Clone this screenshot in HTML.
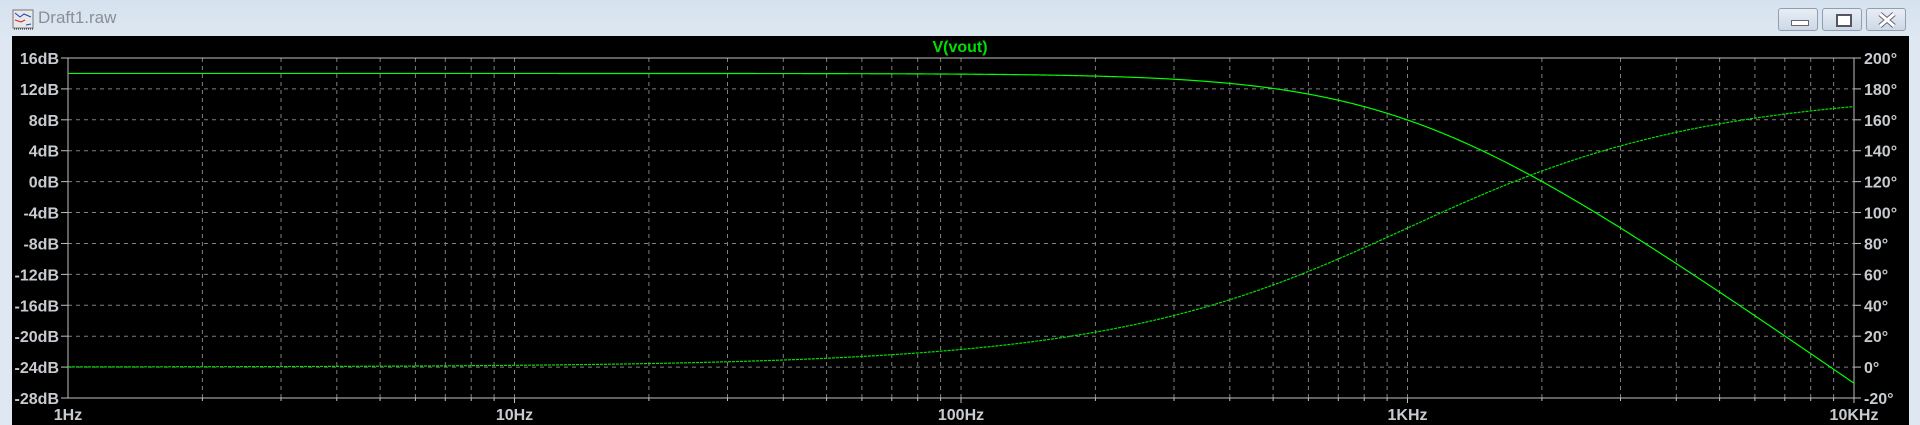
<!DOCTYPE html>
<html><head><meta charset="utf-8"><style>
html,body{margin:0;padding:0;width:1920px;height:425px;overflow:hidden;background:#dfe8f2;font-family:"Liberation Sans",sans-serif}
#tb{position:absolute;left:0;top:0;width:1920px;height:36px;background:linear-gradient(#d6e2ef,#dde7f1)}
#title{position:absolute;left:38px;top:8px;font-size:17px;color:#8a8f96}
.btn{position:absolute;top:8px;width:40px;height:23px;border:1px solid #8e9fb3;border-radius:3px;background:linear-gradient(#e8eef5,#cdd8e5);box-sizing:border-box}
#plot{position:absolute;left:12px;top:36px;width:1897px;height:389px;background:#000}
svg{position:absolute;left:0;top:0}
</style></head><body>
<div id="tb">
<svg width="40" height="36" style="left:12px;top:8px"><rect x="1" y="2" width="20" height="18" fill="#e8e8e8" stroke="#777"/><path d="M3 5 L8 9 L12 6 L19 9" stroke="#2040c0" fill="none"/><path d="M3 12 L9 14 L13 12" stroke="#d02020" fill="none"/><path d="M14 17 L19 16" stroke="#2040c0"/><path d="M2 21 H21" stroke="#222" stroke-dasharray="1,1"/></svg>
<div id="title">Draft1.raw</div>
<div class="btn" style="left:1778px"><div style="position:absolute;left:12px;top:11px;width:16px;height:4px;background:#fff;border:1px solid #667"></div></div>
<div class="btn" style="left:1822px"><div style="position:absolute;left:13px;top:5px;width:12px;height:9px;border:2px solid #556;background:#fff"></div></div>
<div class="btn" style="left:1866px"><svg width="40" height="23" style="left:0;top:0"><path d="M13 5 L27 17 M27 5 L13 17" stroke="#667" stroke-width="5"/><path d="M13 5 L27 17 M27 5 L13 17" stroke="#fff" stroke-width="3"/></svg></div>
</div>
<div id="plot"></div>
<svg id="s" width="1920" height="425"></svg>
<script>
var L=68,R=1854,T=58,B=398,D=(R-L)/4,G=(B-T)/11;
var h='';
function X(f){return L+Math.log10(f)*D}
// vertical grid
for(var d=0;d<4;d++)for(var k=2;k<=10;k++){var x=X(Math.pow(10,d)*k).toFixed(1);
 if(k<10||d<3)h+='<line x1="'+x+'" y1="'+T+'" x2="'+x+'" y2="'+B+'" stroke="#808080" stroke-dasharray="4,4"/>';
 h+='<line x1="'+x+'" y1="'+B+'" x2="'+x+'" y2="'+(B+(k==10?5:3))+'" stroke="#c0c0c0"/>';}
for(var i=1;i<11;i++){var y=(T+i*G).toFixed(1);h+='<line x1="'+L+'" y1="'+y+'" x2="'+R+'" y2="'+y+'" stroke="#808080" stroke-dasharray="4,4"/>';}
h+='<rect x="'+L+'" y="'+T+'" width="'+(R-L)+'" height="'+(B-T)+'" fill="none" stroke="#c0c0c0"/>';
for(var i=0;i<=11;i++){var y=T+i*G;
 h+='<line x1="'+(L-7)+'" y1="'+y+'" x2="'+L+'" y2="'+y+'" stroke="#c0c0c0"/><line x1="'+R+'" y1="'+y+'" x2="'+(R+7)+'" y2="'+y+'" stroke="#c0c0c0"/>';
 h+='<text x="59" y="'+(y+6)+'" text-anchor="end" font-size="16" font-weight="bold" fill="#c8ccd0">'+(16-4*i)+'dB</text>';
 h+='<text x="1864" y="'+(y+6)+'" font-size="16" font-weight="bold" fill="#c8ccd0">'+(200-20*i)+'°</text>';}
var lb=['1Hz','10Hz','100Hz','1KHz','10KHz'];
for(var d=0;d<=4;d++)h+='<text x="'+(L+d*D)+'" y="420" text-anchor="middle" font-size="16" font-weight="bold" fill="#c8ccd0">'+lb[d]+'</text>';
h+='<text x="960" y="52" text-anchor="middle" font-size="16" font-weight="bold" fill="#00e000">V(vout)</text>';
var pm='',pp='';
for(var x=L;x<=R;x+=1){var f=Math.pow(10,(x-L)/D),r=f/1000;
 var db=14-20*Math.log10(1+r*r);var ph=2*Math.atan(r)*180/Math.PI;
 pm+=x+','+(T+(16-db)/4*G).toFixed(2)+' ';pp+=x+','+(T+(200-ph)/20*G).toFixed(2)+' ';}
h+='<polyline points="'+pm+'" fill="none" stroke="#00ff00" stroke-width="1.2"/>';
h+='<polyline points="'+pp+'" fill="none" stroke="#00e000" stroke-width="1.2" stroke-dasharray="3,1"/>';
document.getElementById('s').innerHTML=h;
</script>
</body></html>
